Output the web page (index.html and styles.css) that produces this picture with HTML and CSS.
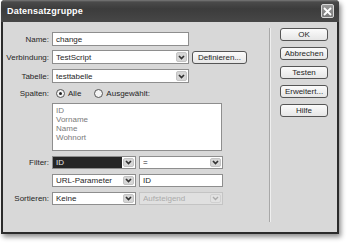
FILE: index.html
```html
<!DOCTYPE html>
<html lang="de">
<head>
  <meta charset="UTF-8" />
  <title>Datensatzgruppe</title>
  <link rel="stylesheet" href="styles.css">
</head>
<body>
  <div class="dialog">
    <div class="titlebar">
      <span class="title">Datensatzgruppe</span>
      <span class="close">
        <svg width="9" height="9" viewBox="0 0 9 9"><path d="M1 1L8 8M8 1L1 8" stroke="#fff" stroke-width="1.8"/></svg>
      </span>
    </div>

    <div class="content">
      <div class="form">
        <div class="row row-name">
          <span class="label">Name:</span>
          <div class="input w-long">change</div>
        </div>

        <div class="row row-conn">
          <span class="label">Verbindung:</span>
          <div class="select w-long"><span class="value">TestScript</span><span class="arrow"></span></div>
          <button class="btn btn-define">Definieren...</button>
        </div>

        <div class="row row-table">
          <span class="label">Tabelle:</span>
          <div class="select w-long"><span class="value">testtabelle</span><span class="arrow"></span></div>
        </div>

        <div class="row row-cols">
          <span class="label">Spalten:</span>
          <span class="radio checked"></span><span class="radio-text">Alle</span>
          <span class="radio"></span><span class="radio-text">Ausgewählt:</span>
        </div>

        <div class="row row-list">
          <span class="label"></span>
          <div class="listbox">
            <div>ID</div>
            <div>Vorname</div>
            <div>Name</div>
            <div>Wohnort</div>
          </div>
        </div>

        <div class="row row-filter">
          <span class="label">Filter:</span>
          <div class="select w-half dark"><span class="value">ID</span><span class="arrow"></span></div>
          <div class="select w-half"><span class="value">=</span><span class="arrow"></span></div>
        </div>

        <div class="row row-param">
          <span class="label"></span>
          <div class="select w-half"><span class="value">URL-Parameter</span><span class="arrow"></span></div>
          <div class="input w-half">ID</div>
        </div>

        <div class="row row-sort">
          <span class="label">Sortieren:</span>
          <div class="select w-half"><span class="value">Keine</span><span class="arrow"></span></div>
          <div class="select w-half disabled"><span class="value">Aufsteigend</span><span class="arrow"></span></div>
        </div>
      </div>

      <div class="separator"></div>

      <div class="buttons">
        <button class="btn">OK</button>
        <button class="btn">Abbrechen</button>
        <button class="btn">Testen</button>
        <button class="btn">Erweitert...</button>
        <button class="btn">Hilfe</button>
      </div>
    </div>
  </div>
</body>
</html>
```

FILE: styles.css
```css
* {
  margin: 0;
  padding: 0;
  box-sizing: border-box;
}

body {
  font-family: 'Liberation Sans', Arial, sans-serif;
  font-size: 8px;
  color: #262626;
  background: #fff;
  width: 350px;
  height: 244px;
  overflow: hidden;
}

.dialog {
  margin-left: 1px;
  width: 338px;
  height: 234px;
  background: #d8d8d8;
  border: 2px solid #2b2b2b;
  border-top: none;
  border-radius: 4px 4px 0 0;
  box-shadow: 2px 3px 5px rgba(0, 0, 0, 0.45);
}

.titlebar {
  height: 22px;
  margin: 0 -2px;
  padding: 0 5px 0 6px;
  display: flex;
  align-items: center;
  justify-content: space-between;
  background: linear-gradient(#7a7a7a 0, #4a4a4a 2px, #3c3c3c 40%, #474747 100%);
  border-radius: 4px 4px 0 0;
}

.title {
  color: #fff;
  font-weight: bold;
  font-size: 9px;
  letter-spacing: 0.2px;
}

.close {
  width: 13px;
  height: 14px;
  display: flex;
  align-items: center;
  justify-content: center;
  background: linear-gradient(#9a9a9a, #7a7a7a);
  border: 1px solid #d8d8d8;
  border-radius: 2px;
}

.content {
  display: flex;
}

.form {
  width: 266px;
  padding-top: 10px;
}

.row {
  display: flex;
  align-items: center;
}

.row-name { height: 14px; }
.row-conn { height: 14px; margin-top: 4px; }
.row-table { height: 14px; margin-top: 5px; }
.row-cols { height: 12px; margin-top: 4px; }
.row-list { height: 48px; margin-top: 4px; align-items: stretch; }
.row-filter { height: 13px; margin-top: 5px; }
.row-param { height: 13px; margin-top: 5px; }
.row-sort { height: 13px; margin-top: 5px; }

.label {
  width: 46px;
  margin-right: 3px;
  text-align: right;
  flex-shrink: 0;
}

.input,
.select {
  height: 100%;
  background: #fff;
  border: 1px solid #8e8e8e;
  display: flex;
  align-items: center;
  padding-left: 3px;
}

.w-long { width: 137px; }
.w-half { width: 84px; }
.w-half + .w-half,
.w-half + .input { margin-left: 3px; }

.select {
  padding-right: 1px;
}

.select .value {
  flex: 1;
  white-space: nowrap;
  overflow: hidden;
}

.select .arrow {
  width: 11px;
  height: calc(100% - 2px);
  flex-shrink: 0;
  border: 1px solid #c4c4c4;
  border-radius: 2px;
  background: #d6d6d6 url("data:image/svg+xml,%3Csvg xmlns='http://www.w3.org/2000/svg' width='7' height='5'%3E%3Cpath d='M1 1l2.5 2.5L6 1' fill='none' stroke='%23333' stroke-width='1.7'/%3E%3C/svg%3E") center no-repeat;
}

.select.dark {
  padding-left: 0;
}

.select.dark .value {
  height: 100%;
  display: flex;
  align-items: center;
  padding-left: 3px;
  background: #262626;
  color: #e8e8e8;
  margin-right: 1px;
}

.select.disabled {
  border-color: #c4c4c4;
  background: #e0e0e0;
  color: #ababab;
}

.select.disabled .arrow {
  background-color: #e2e2e2;
  border-color: #d0d0d0;
  background-image: url("data:image/svg+xml,%3Csvg xmlns='http://www.w3.org/2000/svg' width='7' height='5'%3E%3Cpath d='M1 1l2.5 2.5L6 1' fill='none' stroke='%23aaa' stroke-width='1.4'/%3E%3C/svg%3E");
}

.radio {
  width: 9px;
  height: 9px;
  border: 1px solid #555;
  border-radius: 50%;
  background: #f4f4f4;
  margin-left: 4px;
  display: flex;
  align-items: center;
  justify-content: center;
}

.radio.checked::after {
  content: "";
  width: 3px;
  height: 3px;
  border-radius: 50%;
  background: #222;
}

.radio-text {
  margin-left: 3px;
  margin-right: 9px;
}

.listbox {
  width: 170px;
  background: #fff;
  border: 1px solid #8e8e8e;
  padding: 2px 3px;
  color: #7a7a7a;
  line-height: 9px;
}

.btn {
  font-family: 'Liberation Sans', Arial, sans-serif;
  font-size: 8px;
  color: #262626;
  height: 13px;
  background: linear-gradient(#fbfbfb, #e6e6e6);
  border: 1px solid #555;
  border-radius: 3px;
}

.btn-define {
  width: 55px;
  margin-left: 3px;
}

.separator {
  width: 1px;
  height: 194px;
  margin-top: 6px;
  background: #a8a8a8;
  box-shadow: 1px 0 0 #efefef;
}

.buttons {
  margin-top: 6px;
  margin-left: 10px;
  display: flex;
  flex-direction: column;
  gap: 6px;
}

.buttons .btn {
  width: 48px;
}
```
